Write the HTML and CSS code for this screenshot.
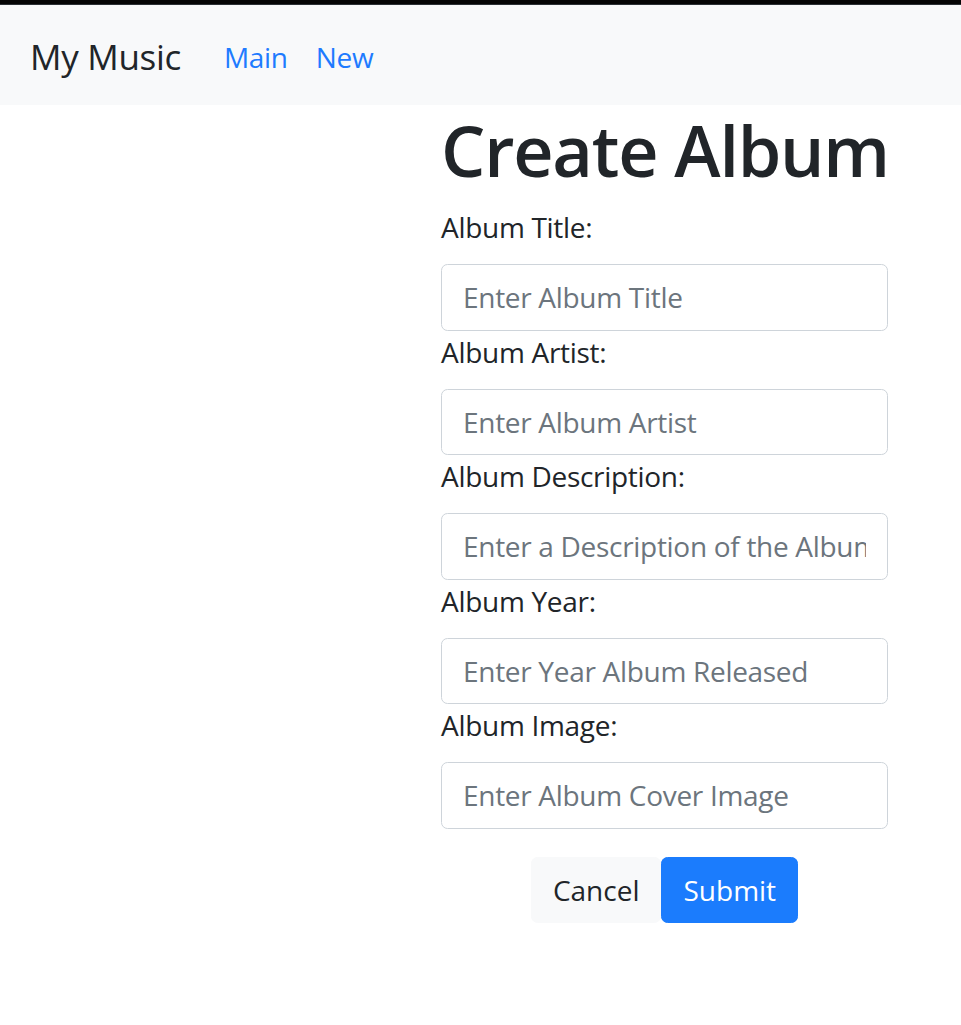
FILE: index.html
```html
<!DOCTYPE html>
<html lang="en">
<head>
<meta charset="utf-8">
<title>My Music</title>
<link rel="stylesheet" href="styles.css">
</head>
<body>
<div class="topstrip"></div>
<nav class="navbar">
  <a class="brand" href="#">My Music</a>
  <ul class="nav">
    <li><a class="nav-link" href="#">Main</a></li>
    <li><a class="nav-link" href="#">New</a></li>
  </ul>
</nav>
<main class="page">
  <section class="form-col">
    <h1 class="title">Create Album</h1>
    <form class="album-form">
      <div class="field">
        <label class="field-label" for="title">Album Title:</label>
        <input class="field-input" id="title" type="text" placeholder="Enter Album Title">
      </div>
      <div class="field">
        <label class="field-label" for="artist">Album Artist:</label>
        <input class="field-input" id="artist" type="text" placeholder="Enter Album Artist">
      </div>
      <div class="field">
        <label class="field-label" for="desc">Album Description:</label>
        <input class="field-input" id="desc" type="text" placeholder="Enter a Description of the Album">
      </div>
      <div class="field">
        <label class="field-label" for="year">Album Year:</label>
        <input class="field-input" id="year" type="text" placeholder="Enter Year Album Released">
      </div>
      <div class="field">
        <label class="field-label" for="image">Album Image:</label>
        <input class="field-input" id="image" type="text" placeholder="Enter Album Cover Image">
      </div>
      <div class="actions">
        <button class="btn btn-light" type="button">Cancel</button>
        <button class="btn btn-primary" type="submit">Submit</button>
      </div>
    </form>
  </section>
</main>
</body>
</html>
```

FILE: styles.css
```css
html, body {
  margin: 0;
  padding: 0;
}
body {
  font-family: "Open Sans", "Noto Sans", sans-serif;
  color: #212529;
  background: #ffffff;
}
.topstrip {
  height: 4px;
  background: #050505;
  border-bottom: 1px solid #2b3035;
}
.navbar {
  height: 100px;
  background: #f8f9fa;
  display: flex;
  align-items: center;
  padding-left: 30px;
  padding-top: 3px;
  box-sizing: border-box;
}
.brand {
  font-size: 35px;
  line-height: 52px;
  letter-spacing: -0.3px;
  color: #212529;
  text-decoration: none;
  margin-right: 29px;
}
.nav {
  list-style: none;
  margin: 0;
  padding: 0;
  display: flex;
}
.nav-link {
  display: block;
  font-size: 28px;
  line-height: 42px;
  letter-spacing: -0.3px;
  padding: 0 14px;
  color: #1e7bff;
  text-decoration: none;
}
.page {
  padding-left: 441px;
}
.form-col {
  width: 447px;
}
.title {
  font-size: 70px;
  font-weight: 600;
  line-height: 88px;
  letter-spacing: -1.2px;
  white-space: nowrap;
  margin: 1px 0 12px;
}
.album-form {
  margin: 0;
}
.field-label {
  display: block;
  font-size: 28px;
  line-height: 42px;
  letter-spacing: -0.3px;
  margin-bottom: 16px;
}
.field-input {
  display: block;
  box-sizing: border-box;
  width: 100%;
  height: 66.5px;
  padding: 0 21px;
  font-family: inherit;
  font-size: 28px;
  letter-spacing: -0.3px;
  color: #212529;
  background: #fff;
  border: 1.75px solid #ced4da;
  border-radius: 6.5px;
  outline: none;
}
.field-input::placeholder {
  color: #6c757d;
}
.actions {
  display: flex;
  justify-content: center;
  margin-top: 28px;
}
.btn {
  font-family: inherit;
  font-size: 28px;
  line-height: 42px;
  height: 66.5px;
  padding: 0 21px;
  border: 1.75px solid transparent;
  border-radius: 6.5px;
  cursor: pointer;
}
.btn-light {
  background: #f8f9fa;
  border-color: #f8f9fa;
  color: #212529;
}
.btn-primary {
  background: #1b7cfd;
  border-color: #1b7cfd;
  color: #ffffff;
}
```
